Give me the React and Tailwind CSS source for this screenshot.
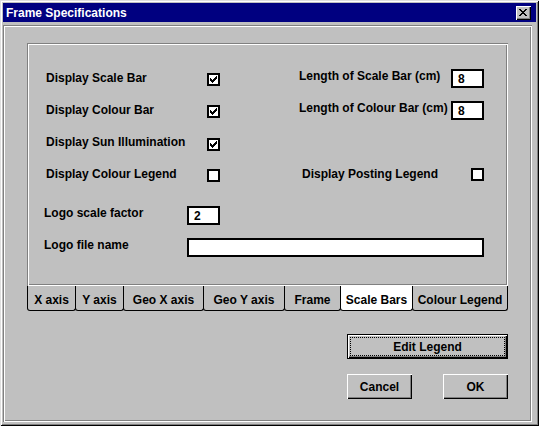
import React from "react";

const CHECK = [
  "......X",
  ".....XX",
  "X...XXX",
  "XX.XXX.",
  "XXXXX..",
  ".XXX...",
  "..X....",
];

const CLOSE = [
  "XX....XX",
  ".XX..XX.",
  "..XXXX..",
  "...XX...",
  "..XXXX..",
  ".XX..XX.",
  "XX....XX",
];

function Pixels({ rows }) {
  const rects = [];
  rows.forEach((r, y) =>
    r.split("").forEach((c, x) => {
      if (c === "X") rects.push(<rect key={`${x}-${y}`} x={x} y={y} width="1" height="1" fill="#000" />);
    })
  );
  return (
    <svg width={rows[0].length} height={rows.length} viewBox={`0 0 ${rows[0].length} ${rows.length}`} shapeRendering="crispEdges">
      {rects}
    </svg>
  );
}

function Check({ checked }) {
  return (
    <div className="w-[13px] h-[13px] border-2 border-black bg-white flex items-center justify-center">
      {checked && <Pixels rows={CHECK} />}
    </div>
  );
}

function Field({ w, value }) {
  return (
    <div className={`${w} h-[19px] border-2 border-black bg-white flex items-center pl-[5px]`}>
      {value}
    </div>
  );
}

const tabs = [
  { label: "X axis", w: "w-[49px]" },
  { label: "Y axis", w: "w-[49px]" },
  { label: "Geo X axis", w: "w-[81px]" },
  { label: "Geo Y axis", w: "w-[82px]" },
  { label: "Frame", w: "w-[57px]" },
  { label: "Scale Bars", w: "w-[73px]", active: true },
  { label: "Colour Legend", w: "w-[96px]" },
];

export default function App() {
  return (
    <div className="w-[539px] h-[426px] bg-[#c0c0c0] p-[3px] flex flex-col font-['Liberation_Sans',Arial,sans-serif] text-[12px] font-bold leading-[14px] text-black shadow-[inset_1px_1px_0_#dfdfdf,inset_-1px_-1px_0_#000,inset_2px_2px_0_#fff,inset_-2px_-2px_0_#808080]">
      {/* Title bar */}
      <div className="h-[19px] bg-[#000080] flex items-center justify-between pl-[3px] pr-[5px]">
        <span className="text-white">Frame Specifications</span>
        <div className="w-[15px] h-[14px] bg-[#c0c0c0] flex items-center justify-center pr-[1px] pb-[1px] shadow-[inset_1px_1px_0_#fff,inset_-1px_-1px_0_#000,inset_-2px_-2px_0_#808080]">
          <Pixels rows={CLOSE} />
        </div>
      </div>

      {/* Etched frame */}
      <div className="mt-[3px] w-[529px] h-[397px] pl-[24px] pt-[18px] flex flex-col shadow-[inset_1px_1px_0_#808080,inset_-1px_-1px_0_#fff,inset_2px_2px_0_#fff,inset_-2px_-2px_0_#808080]">
        {/* Tab panel */}
        <div className="w-[481px] h-[243px] pt-[25px] flex flex-col shadow-[inset_1px_1px_0_#808080,inset_-1px_-1px_0_#fff,inset_2px_2px_0_#fff,inset_-2px_-2px_0_#808080]">
          {/* Row 1 */}
          <div className="h-[20px] flex items-start pl-[19px]">
            <div className="w-[161px] mt-[3px]">Display Scale Bar</div>
            <div className="w-[92px] mt-[5px]"><Check checked /></div>
            <div className="w-[152px] mt-[1px]">Length of Scale Bar (cm)</div>
            <div className="mt-[1px]"><Field w="w-[33px]" value="8" /></div>
          </div>
          {/* Row 2 */}
          <div className="h-[20px] mt-[12px] flex items-start pl-[19px]">
            <div className="w-[161px] mt-[3px]">Display Colour Bar</div>
            <div className="w-[92px] mt-[5px]"><Check checked /></div>
            <div className="w-[152px] mt-[1px]">Length of Colour Bar (cm)</div>
            <div className="mt-[1px]"><Field w="w-[33px]" value="8" /></div>
          </div>
          {/* Row 3 */}
          <div className="h-[20px] mt-[12px] flex items-start pl-[19px]">
            <div className="w-[161px] mt-[3px]">Display Sun Illumination</div>
            <div className="w-[92px] mt-[6px]"><Check checked /></div>
          </div>
          {/* Row 4 */}
          <div className="h-[20px] mt-[12px] flex items-start pl-[19px]">
            <div className="w-[161px] mt-[3px]">Display Colour Legend</div>
            <div className="w-[95px] mt-[5px]"><Check /></div>
            <div className="w-[169px] mt-[3px]">Display Posting Legend</div>
            <div className="mt-[4px]"><Check /></div>
          </div>
          {/* Logo rows */}
          <div className="h-[20px] mt-[22px] flex items-start pl-[17px]">
            <div className="w-[143px]">Logo scale factor</div>
            <Field w="w-[33px]" value="2" />
          </div>
          <div className="h-[20px] mt-[12px] flex items-start pl-[17px]">
            <div className="w-[143px]">Logo file name</div>
            <Field w="w-[297px]" value="" />
          </div>
        </div>

        {/* Tabs */}
        <div className="flex h-[25px]">
          {tabs.map((t, i) => (
            <div
              key={t.label}
              className={`${t.w} h-[25px] flex justify-center pt-[7px] border border-t-0 border-black rounded-b-[3px] ${i > 0 ? "-ml-[1px]" : ""} ${t.active ? "bg-white relative z-10" : "bg-[#c0c0c0]"}`}
            >
              {t.label}
            </div>
          ))}
        </div>

        {/* Buttons */}
        <div className="w-[481px] flex justify-end mt-[23px]">
          <div className="flex flex-col w-[161px]">
            <div className="w-[161px] h-[25px] border border-black p-[2px] flex bg-[#c0c0c0] shadow-[inset_1px_1px_0_#fff,inset_-1px_-1px_0_#000,inset_-2px_-2px_0_#808080]">
              <div className="flex-1 border border-dotted border-black flex items-center justify-center">Edit Legend</div>
            </div>
            <div className="flex justify-between mt-[15px]">
              <div className="w-[65px] h-[25px] flex items-center justify-center bg-[#c0c0c0] shadow-[inset_1px_1px_0_#fff,inset_-1px_-1px_0_#000,inset_-2px_-2px_0_#808080]">Cancel</div>
              <div className="w-[65px] h-[25px] flex items-center justify-center bg-[#c0c0c0] shadow-[inset_1px_1px_0_#fff,inset_-1px_-1px_0_#000,inset_-2px_-2px_0_#808080]">OK</div>
            </div>
          </div>
        </div>
      </div>
    </div>
  );
}
